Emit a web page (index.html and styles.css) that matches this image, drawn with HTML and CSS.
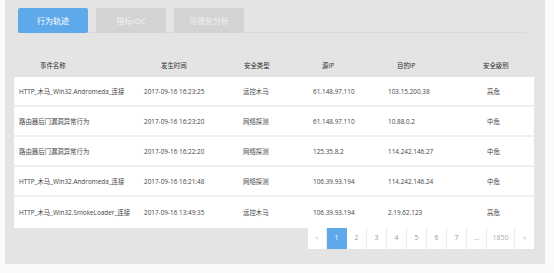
FILE: index.html
```html
<!DOCTYPE html>
<html lang="zh-CN">
<head>
    <meta charset="UTF-8">
    <title>事件列表</title>
    <link rel="stylesheet" href="styles.css">
</head>
<body>
    <div class="panel">
        <nav class="tabs">
            <button class="tab active">行为轨迹</button>
            <button class="tab">指标IOC</button>
            <button class="tab">可视化分析</button>
        </nav>

        <div class="table">
            <div class="row head">
                <span class="c1">事件名称</span>
                <span class="c2">发生时间</span>
                <span class="c3">安全类型</span>
                <span class="c4">源IP</span>
                <span class="c5">目的IP</span>
                <span class="c6">安全级别</span>
            </div>
            <div class="body">
                <div class="row">
                    <span>HTTP_木马_Win32.Andromeda_连接</span>
                    <span>2017-09-16 16:23:25</span>
                    <span>远控木马</span>
                    <span>61.148.97.110</span>
                    <span>103.15.200.38</span>
                    <span>高危</span>
                </div>
                <div class="row">
                    <span>路由器后门漏洞异常行为</span>
                    <span>2017-09-16 16:23:20</span>
                    <span>网络探测</span>
                    <span>61.148.97.110</span>
                    <span>10.88.0.2</span>
                    <span>中危</span>
                </div>
                <div class="row">
                    <span>路由器后门漏洞异常行为</span>
                    <span>2017-09-16 16:22:20</span>
                    <span>网络探测</span>
                    <span>125.35.8.2</span>
                    <span>114.242.146.27</span>
                    <span>中危</span>
                </div>
                <div class="row">
                    <span>HTTP_木马_Win32.Andromeda_连接</span>
                    <span>2017-09-16 16:21:48</span>
                    <span>网络探测</span>
                    <span>106.39.93.194</span>
                    <span>114.242.146.24</span>
                    <span>中危</span>
                </div>
                <div class="row last">
                    <span>HTTP_木马_Win32.SmokeLoader_连接</span>
                    <span>2017-09-16 13:49:35</span>
                    <span>远控木马</span>
                    <span>106.39.93.194</span>
                    <span>2.19.62.123</span>
                    <span>高危</span>
                </div>
            </div>
        </div>

        <div class="pager">
            <a class="page arrow">&laquo;</a>
            <a class="page current">1</a>
            <a class="page">2</a>
            <a class="page">3</a>
            <a class="page">4</a>
            <a class="page">5</a>
            <a class="page">6</a>
            <a class="page">7</a>
            <a class="page">...</a>
            <a class="page wide">1850</a>
            <a class="page arrow">&raquo;</a>
        </div>
    </div>
</body>
</html>
```

FILE: styles.css
```css
* {
    margin: 0;
    padding: 0;
    box-sizing: border-box;
}

body {
    font-family: "Open Sans", "Noto Sans CJK SC", sans-serif;
    background-color: #fafafa;
    width: 554px;
    height: 273px;
    overflow: hidden;
}

.panel {
    margin-left: 5px;
    width: 540px;
    height: 264px;
    background-color: #e4e4e4;
    padding: 8px 11px 0 9px;
}

.tabs {
    display: flex;
    gap: 8px;
    width: 513px;
    padding-left: 4px;
    border-bottom: 1px solid #dadada;
    height: 25px;
}

.tab {
    width: 70px;
    height: 25px;
    border: none;
    border-radius: 2px;
    background-color: #d3d3d3;
    color: #f2f2f2;
    font-family: inherit;
    font-size: 8px;
}

.tab.active {
    background-color: #5ea9e9;
    color: #fff;
}

.table {
    margin-top: 19px;
}

.row {
    display: grid;
    grid-template-columns: 125px 99px 70px 75px 99px 51px;
    align-items: center;
    height: 30px;
    font-size: 6.4px;
    color: #444;
    border-bottom: 2px solid #efefef;
}

.row span {
    padding-left: 5px;
    white-space: nowrap;
}

.row.head {
    height: 25px;
    color: #2e2e2e;
    border-bottom: none;
    padding-top: 2px;
}

.head .c1 { padding-left: 26px; }
.head .c2 { padding-left: 22px; }
.head .c3 { padding-left: 6px; }
.head .c4 { padding-left: 14px; }
.head .c5 { padding-left: 14px; }
.head .c6 { padding-left: 1px; }

.body {
    background-color: #fff;
}

.row.last {
    height: 31px;
    border-bottom: none;
}

.pager {
    display: flex;
    justify-content: flex-end;
}

.page {
    width: 20px;
    height: 21px;
    line-height: 20px;
    text-align: center;
    background-color: #fff;
    border-right: 1px solid #ececec;
    font-size: 7px;
    color: #999;
}

.page.arrow {
    width: 19px;
    color: #c4c4c4;
}

.page.wide {
    width: 28px;
    color: #aaa;
}

.page.current {
    background-color: #5ea9e9;
    color: #fff;
    border-color: #5ea9e9;
}

.page:last-child {
    border-right: none;
}
```
